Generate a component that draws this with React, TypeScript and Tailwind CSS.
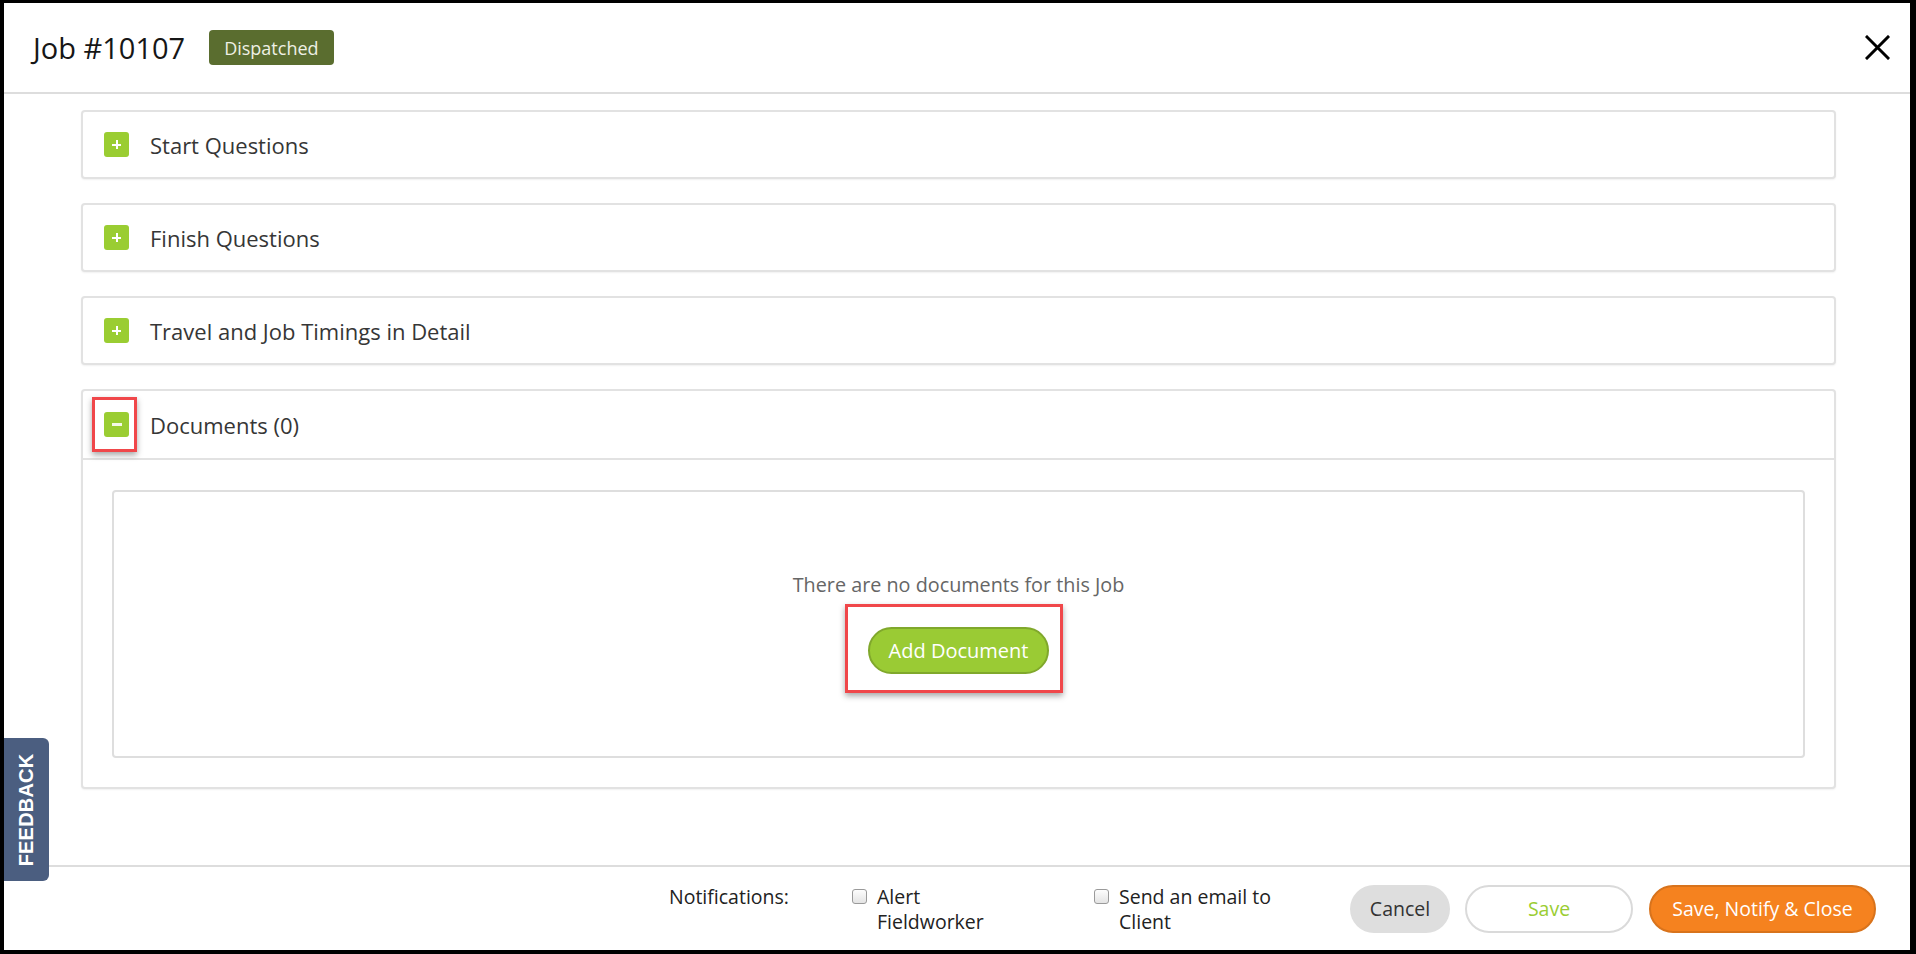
import React from "react";

function PlusIcon() {
  return (
    <span className="relative flex h-[25px] w-[25px] shrink-0 items-center justify-center rounded-[3px] bg-[#9acd32]">
      <span className="absolute h-[2px] w-[9px] bg-white" />
      <span className="absolute h-[9px] w-[2px] bg-white" />
    </span>
  );
}

function MinusIcon() {
  return (
    <span className="relative flex h-[25px] w-[25px] shrink-0 items-center justify-center rounded-[3px] bg-[#9acd32]">
      <span className="absolute h-[3px] w-[10px] bg-[#f4f9e8]" />
      <span className="pointer-events-none absolute left-[-12px] top-[-15px] h-[55px] w-[45px] border-[3px] border-[#f0474a] shadow-[0_3px_6px_rgba(0,0,0,0.35)]" />
    </span>
  );
}

function CollapsedPanel({ title }: { title: string }) {
  return (
    <div className="flex h-[69px] shrink-0 items-center rounded-[4px] border-2 border-[#e2e2e2] bg-white pl-[21px] shadow-[0_1px_2px_rgba(0,0,0,0.06)]">
      <PlusIcon />
      <span className="ml-[21px] text-[22px] leading-none text-[#363636]">{title}</span>
    </div>
  );
}

function Checkbox() {
  return (
    <span className="mt-[5px] h-[15px] w-[15px] shrink-0 rounded-[3px] border border-[#9a9a9a] bg-gradient-to-b from-[#fdfdfd] to-[#e4e4e4]" />
  );
}

export default function App() {
  return (
    <div className="h-[954px] w-[1916px] overflow-hidden bg-black pb-[4px] pl-[4px] pr-[6px] pt-[3px]">
      <div className="relative flex h-full w-full flex-col bg-white font-['Open_Sans','Noto_Sans',sans-serif]">
        {/* Header */}
        <header className="flex h-[91px] shrink-0 items-center border-b-2 border-[#dddddd] pl-[29px] pr-[20px]">
          <h1 className="text-[29px] font-normal leading-none text-[#161616]">Job #10107</h1>
          <span className="ml-[24px] flex h-[35px] items-center rounded-[4px] bg-[#5a6d2f] px-[15px] text-[18px] leading-none text-[#eef0e4]">
            Dispatched
          </span>
          <button className="ml-auto flex h-[25px] w-[25px] items-center justify-center" aria-label="Close">
            <svg width="25" height="25" viewBox="0 0 25 25">
              <path d="M2 2 L23 23 M23 2 L2 23" stroke="#000" strokeWidth="3" strokeLinecap="square" />
            </svg>
          </button>
        </header>

        {/* Body */}
        <main className="flex flex-1 flex-col gap-[24px] pl-[77px] pr-[74px] pt-[16px]">
          <CollapsedPanel title="Start Questions" />
          <CollapsedPanel title="Finish Questions" />
          <CollapsedPanel title="Travel and Job Timings in Detail" />

          <div className="shrink-0 rounded-[4px] border-2 border-[#e2e2e2] bg-white shadow-[0_1px_2px_rgba(0,0,0,0.06)]">
            <div className="flex h-[69px] items-center border-b-2 border-[#e2e2e2] pl-[21px]">
              <MinusIcon />
              <span className="ml-[21px] text-[22px] leading-none text-[#363636]">Documents (0)</span>
            </div>
            <div className="px-[29px] pb-[29px] pt-[30px]">
              <div className="flex h-[268px] flex-col items-center rounded-[4px] border-2 border-[#dedede] pt-[79px]">
                <p className="text-[19.8px] leading-[27px] text-[#666666]">There are no documents for this Job</p>
                <div className="relative mt-[29px]">
                  <button className="flex h-[47px] items-center rounded-full border-2 border-[#80a82c] bg-[#9acb34] px-[19px] text-[20px] leading-none text-white">
                    Add Document
                  </button>
                  <span className="pointer-events-none absolute left-[-23px] top-[-23px] h-[89px] w-[218px] border-[3px] border-[#f0474a] shadow-[0_3px_6px_rgba(0,0,0,0.35)]" />
                </div>
              </div>
            </div>
          </div>
        </main>

        {/* Footer */}
        <footer className="flex h-[85px] shrink-0 items-center justify-end border-t-2 border-[#dddddd] pr-[34px]">
          <div className="flex items-start text-[19.5px] leading-[25px] text-[#222222]">
            <span className="w-[183px]">Notifications:</span>
            <label className="flex w-[242px] items-start">
              <Checkbox />
              <span className="ml-[10px] w-[150px]">Alert Fieldworker</span>
            </label>
            <label className="flex w-[256px] items-start">
              <Checkbox />
              <span className="ml-[10px] w-[165px]">Send an email to Client</span>
            </label>
          </div>
          <button className="flex h-[48px] w-[100px] items-center justify-center rounded-full bg-[#dedede] text-[19.5px] leading-none text-[#333333]">
            Cancel
          </button>
          <button className="ml-[15px] flex h-[48px] w-[168px] items-center justify-center rounded-full border-2 border-[#dadada] bg-white text-[19.5px] leading-none text-[#9acd32]">
            Save
          </button>
          <button className="ml-[16px] flex h-[48px] w-[227px] items-center justify-center rounded-full border-2 border-[#d8731c] bg-[#f5821f] text-[19.5px] leading-none text-white">
            Save, Notify &amp; Close
          </button>
        </footer>

        {/* Feedback tab */}
        <div className="absolute left-0 top-[735px] flex h-[143px] w-[45px] items-center justify-center rounded-r-[6px] bg-[#4b5e80]">
          <span className="-rotate-90 whitespace-nowrap font-['Liberation_Sans',Arial,sans-serif] text-[20px] font-bold leading-none tracking-[0.2px] text-white">
            FEEDBACK
          </span>
        </div>
      </div>
    </div>
  );
}
